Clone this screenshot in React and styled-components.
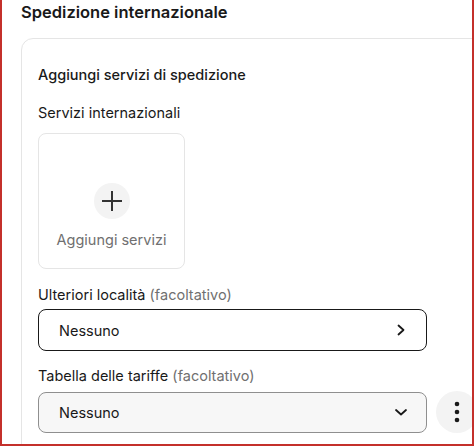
import React from "react";
import styled, { createGlobalStyle } from "styled-components";

const Global = createGlobalStyle`
  html, body { margin: 0; padding: 0; background: #fff; }
  body { font-family: Inter, "Open Sans", Arial, sans-serif; color: #191919; }
  * { box-sizing: border-box; }
`;

const Frame = styled.div`
  width: 474px;
  height: 446px;
  overflow: hidden;
  border-left: 2px solid #c4302b;
  border-right: 2px solid #c4302b;
  border-bottom: 2px solid #c4302b;
  padding: 0 0 0 19px;
  background: #fff;
`;

const PageTitle = styled.h2`
  margin: 0;
  padding-top: 2px;
  height: 38px;
  font-size: 16.5px;
  font-weight: 600;
  line-height: 20px;
  color: #191919;
`;

const Card = styled.section`
  width: 560px;
  border: 1px solid #e5e5e5;
  border-radius: 12px;
  padding: 26px 16px 24px 16px;
`;

const SectionTitle = styled.h3`
  margin: 0 0 18px;
  font-size: 14.5px;
  font-weight: 500;
  line-height: 20px;
`;

const Label = styled.div`
  font-size: 14.5px;
  line-height: 20px;
  color: #191919;
  margin-bottom: ${(p) => p.$mb || 8}px;
`;

const Optional = styled.span`
  color: #707070;
`;

const Tile = styled.button`
  width: 147px;
  height: 136px;
  border: 1px solid #e5e5e5;
  border-radius: 8px;
  background: #fff;
  display: flex;
  flex-direction: column;
  align-items: center;
  padding-top: 49px;
  gap: 11px;
  font: inherit;
  cursor: pointer;
  margin-bottom: 16px;
`;

const PlusCircle = styled.span`
  width: 36px;
  height: 36px;
  border-radius: 50%;
  background: #f3f3f3;
  display: flex;
  align-items: center;
  justify-content: center;
`;

const TileText = styled.span`
  font-size: 14.5px;
  line-height: 20px;
  color: #707070;
`;

const Field = styled.div`
  display: flex;
  align-items: center;
  gap: 9px;
  margin-bottom: ${(p) => p.$mb || 0}px;
`;

const Control = styled.button`
  width: 389px;
  height: ${(p) => (p.$filled ? 41 : 42)}px;
  border-radius: 8px;
  border: 1px solid ${(p) => (p.$filled ? "#8f8f8f" : "#191919")};
  background: ${(p) => (p.$filled ? "#f7f7f7" : "#fff")};
  display: flex;
  align-items: center;
  justify-content: space-between;
  padding: 0 18px 0 20px;
  font: inherit;
  font-size: 14.5px;
  color: #191919;
  cursor: pointer;
`;

const IconButton = styled.button`
  width: 42px;
  height: 42px;
  border-radius: 50%;
  border: none;
  background: #f3f3f3;
  display: flex;
  align-items: center;
  justify-content: center;
  padding: 0;
  flex: 0 0 auto;
`;

const Plus = () => (
  <svg width="22" height="22" viewBox="0 0 22 22">
    <path d="M11 1v20M1 11h20" stroke="#333" strokeWidth="2" fill="none" />
  </svg>
);

const ChevronRight = () => (
  <svg width="14" height="14" viewBox="0 0 14 14">
    <path d="M4.5 2.5l5 4.5-5 4.5" stroke="#191919" strokeWidth="1.8" fill="none" strokeLinecap="round" strokeLinejoin="round" />
  </svg>
);

const ChevronDown = () => (
  <svg width="14" height="14" viewBox="0 0 14 14">
    <path d="M2 5l5 4.5L12 5" stroke="#191919" strokeWidth="1.8" fill="none" strokeLinecap="round" strokeLinejoin="round" />
  </svg>
);

const Kebab = () => (
  <svg width="6" height="22" viewBox="0 0 6 22">
    <circle cx="3" cy="3" r="2.3" fill="#191919" />
    <circle cx="3" cy="11" r="2.3" fill="#191919" />
    <circle cx="3" cy="19" r="2.3" fill="#191919" />
  </svg>
);

export default function App() {
  return (
    <>
      <Global />
      <Frame>
        <PageTitle>Spedizione internazionale</PageTitle>
        <Card>
          <SectionTitle>Aggiungi servizi di spedizione</SectionTitle>
          <Label $mb={10}>Servizi internazionali</Label>
          <Tile>
            <PlusCircle>
              <Plus />
            </PlusCircle>
            <TileText>Aggiungi servizi</TileText>
          </Tile>
          <Label $mb={4}>
            Ulteriori località <Optional>(facoltativo)</Optional>
          </Label>
          <Field $mb={15}>
            <Control>
              <span>Nessuno</span>
              <ChevronRight />
            </Control>
          </Field>
          <Label $mb={5}>
            Tabella delle tariffe <Optional>(facoltativo)</Optional>
          </Label>
          <Field>
            <Control $filled>
              <span>Nessuno</span>
              <ChevronDown />
            </Control>
            <IconButton aria-label="Altro">
              <Kebab />
            </IconButton>
          </Field>
        </Card>
      </Frame>
    </>
  );
}
